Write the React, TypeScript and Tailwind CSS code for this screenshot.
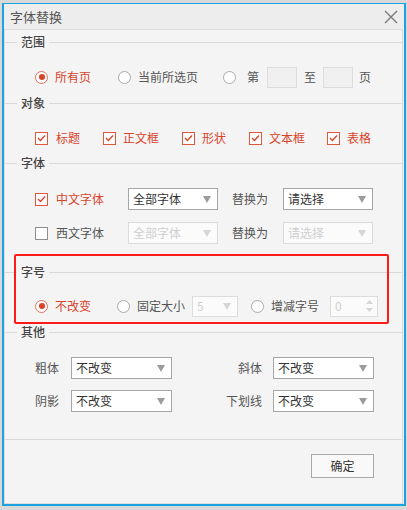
import React from "react";

const font = { fontFamily: '"Noto Sans CJK SC", "Noto Sans", sans-serif' };

function Radio({ checked }: { checked?: boolean }) {
  return (
    <span
      className={`w-[13px] h-[13px] shrink-0 rounded-full border bg-white flex items-center justify-center ${
        checked ? "border-[#e2735a]" : "border-[#a9a9a9]"
      }`}
    >
      {checked && <span className="w-[6px] h-[6px] rounded-full bg-[#d8432a]" />}
    </span>
  );
}

function Check({ checked }: { checked?: boolean }) {
  return (
    <span
      className={`w-[13px] h-[13px] shrink-0 border bg-white flex items-center justify-center ${
        checked ? "border-[#e0573b]" : "border-[#8f8f8f]"
      }`}
    >
      {checked && (
        <svg width="11" height="11" viewBox="0 0 11 11">
          <polyline points="2,5 4.5,7.5 9,2.5" fill="none" stroke="#d8432a" strokeWidth="1.3" />
        </svg>
      )}
    </span>
  );
}

function Arrow({ color }: { color: string }) {
  return (
    <svg width="8" height="7" viewBox="0 0 8 7">
      <polygon points="0,0 8,0 4,7" fill={color} />
    </svg>
  );
}

function Select({ text, w, disabled }: { text: string; w: string; disabled?: boolean }) {
  return (
    <div
      className={`${w} h-[22px] shrink-0 border flex items-center justify-between pl-[4px] pr-[6px] ${
        disabled ? "border-[#dcdcdc] bg-[#fbfbfb] text-[#cfcfcf]" : "border-[#a6a6a6] bg-white text-[#333]"
      }`}
    >
      <span>{text}</span>
      <Arrow color={disabled ? "#d6d6d6" : "#9c9c9c"} />
    </div>
  );
}

function Header({ label }: { label: string }) {
  return (
    <div className="h-4 flex items-center">
      <div className="w-[12px] h-px bg-[#d9d9d9]" />
      <span className="px-[4px] text-[12px] text-[#444] font-medium">{label}</span>
      <div className="flex-1 h-px bg-[#d9d9d9]" />
    </div>
  );
}

export default function App() {
  return (
    <div className="relative w-[407px] h-[510px] bg-[#d9d9d9] pt-[3px] pl-[2px] text-[12px] overflow-hidden" style={font}>
      <div className="w-[404px] h-[503px] border-x-2 border-b-2 border-t border-[#1ba3df] bg-[#ededed] flex flex-col">
        <div className="h-[25px] shrink-0 flex items-center justify-between pl-[6px] pr-[6px]">
          <span className="text-[13px] text-[#555]">字体替换</span>
          <svg width="14" height="14" viewBox="0 0 14 14" className="mt-[1px]">
            <path d="M1 1 L13 13 M13 1 L1 13" stroke="#7a7a7a" strokeWidth="1.4" />
          </svg>
        </div>
        <div className="flex-1 mr-[1px] border border-[#dddddd] bg-[#f4f4f4] flex flex-col text-[#555]">
          <div className="mt-[4px]">
            <Header label="范围" />
          </div>
          <div className="mt-[16px] h-[22px] flex items-center pl-[30px]">
            <Radio checked />
            <span className="ml-[7px] text-[#d8432a]">所有页</span>
            <span className="ml-[27px]"><Radio /></span>
            <span className="ml-[7px]">当前所选页</span>
            <span className="ml-[25px]"><Radio /></span>
            <span className="ml-[11px]">第</span>
            <div className="ml-[8px] w-[30px] h-[21px] border border-[#dcdcdc] bg-[#f0f0f0]" />
            <span className="ml-[7px]">至</span>
            <div className="ml-[7px] w-[30px] h-[21px] border border-[#dcdcdc] bg-[#f0f0f0]" />
            <span className="ml-[6px]">页</span>
          </div>
          <div className="mt-[7px]">
            <Header label="对象" />
          </div>
          <div className="mt-[16px] h-[22px] flex items-center pl-[30px] text-[#d8432a]">
            <Check checked />
            <span className="ml-[8px]">标题</span>
            <span className="ml-[23px]"><Check checked /></span>
            <span className="ml-[7px]">正文框</span>
            <span className="ml-[23px]"><Check checked /></span>
            <span className="ml-[7px]">形状</span>
            <span className="ml-[23px]"><Check checked /></span>
            <span className="ml-[7px]">文本框</span>
            <span className="ml-[22px]"><Check checked /></span>
            <span className="ml-[7px]">表格</span>
          </div>
          <div className="mt-[6px]">
            <Header label="字体" />
          </div>
          <div className="mt-[17px] h-[22px] flex items-center pl-[30px]">
            <Check checked />
            <span className="ml-[8px] w-[72px] text-[#d8432a]">中文字体</span>
            <Select text="全部字体" w="w-[90px]" />
            <span className="ml-[14px] w-[51px]">替换为</span>
            <Select text="请选择" w="w-[90px]" />
          </div>
          <div className="mt-[12px] h-[22px] flex items-center pl-[30px]">
            <Check />
            <span className="ml-[8px] w-[72px]">西文字体</span>
            <Select text="全部字体" w="w-[90px]" disabled />
            <span className="ml-[14px] w-[51px]">替换为</span>
            <Select text="请选择" w="w-[90px]" disabled />
          </div>
          <div className="mt-[20px]">
            <Header label="字号" />
          </div>
          <div className="mt-[15px] h-[22px] flex items-center pl-[30px]">
            <Radio checked />
            <span className="ml-[7px] text-[#d8432a]">不改变</span>
            <span className="ml-[26px]"><Radio /></span>
            <span className="ml-[7px]">固定大小</span>
            <div className="ml-[7px] w-[46px] h-[21px] border border-[#dcdcdc] bg-[#fbfbfb] text-[#cfcfcf] flex items-center justify-between pl-[4px] pr-[6px]">
              <span>5</span>
              <Arrow color="#d6d6d6" />
            </div>
            <span className="ml-[13px]"><Radio /></span>
            <span className="ml-[7px]">增减字号</span>
            <div className="ml-[11px] w-[48px] h-[21px] border border-[#dcdcdc] bg-[#fbfbfb] text-[#cfcfcf] flex items-center justify-between pl-[4px] pr-[4px]">
              <span>0</span>
              <svg width="7" height="14" viewBox="0 0 7 14">
                <polygon points="3.5,1 7,5 0,5" fill="#d6d6d6" />
                <polygon points="0,9 7,9 3.5,13" fill="#d6d6d6" />
              </svg>
            </div>
          </div>
          <div className="mt-[7px]">
            <Header label="其他" />
          </div>
          <div className="mt-[17px] h-[22px] flex items-center">
            <span className="w-[66px] text-right pr-[12px] pl-[30px]">粗体</span>
            <Select text="不改变" w="w-[101px]" />
            <span className="w-[101px] text-right pr-[11px]">斜体</span>
            <Select text="不改变" w="w-[101px]" />
          </div>
          <div className="mt-[11px] h-[22px] flex items-center">
            <span className="w-[66px] text-right pr-[12px] pl-[30px]">阴影</span>
            <Select text="不改变" w="w-[101px]" />
            <span className="w-[101px] text-right pr-[11px]">下划线</span>
            <Select text="不改变" w="w-[101px]" />
          </div>
          <div className="mt-[27px] h-px bg-[#d9d9d9]" />
          <div className="mt-[14px] flex justify-end pr-[28px]">
            <button className="w-[63px] h-[24px] border border-[#a8a8a8] bg-[#f9f9f9] text-[#333] text-[12px]">确定</button>
          </div>
        </div>
      </div>
      <div className="absolute left-[14px] top-[254px] w-[375px] h-[70px] border-2 border-[#ff1a1a] rounded-[2px]" />
    </div>
  );
}
